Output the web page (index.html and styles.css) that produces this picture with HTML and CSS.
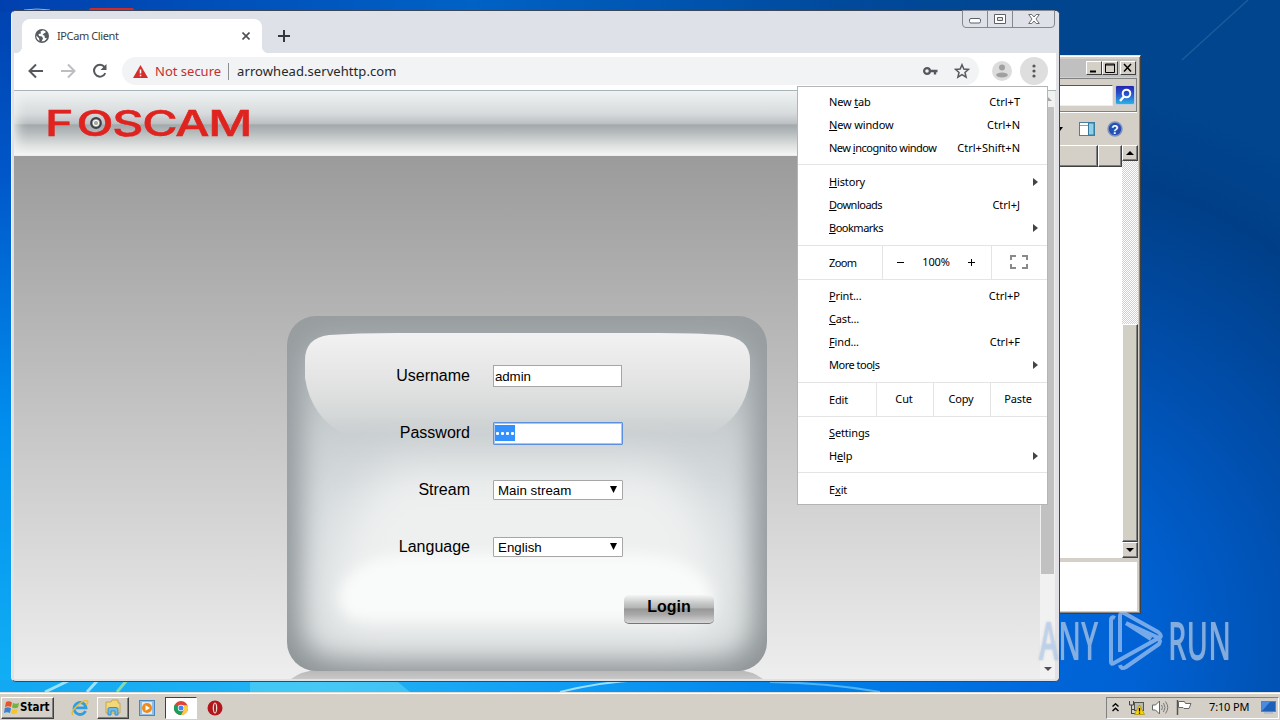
FILE: index.html
```html
<!DOCTYPE html>
<html lang="en">
<head>
  <meta charset="utf-8">
  <title>IPCam Client</title>
  <link rel="stylesheet" href="styles.css">
</head>
<body>
  <div class="desktop">
    <svg class="wallpaper" width="1280" height="692" viewBox="0 0 1280 692">
      <defs>
        <linearGradient id="sky" x1="0" y1="0" x2="0" y2="1">
          <stop offset="0" stop-color="#0042b0"/>
          <stop offset=".25" stop-color="#0057c8"/>
          <stop offset=".6" stop-color="#008cec"/>
          <stop offset="1" stop-color="#12b0f5"/>
        </linearGradient>
        <linearGradient id="floor" x1="0" y1="0" x2="1" y2="0">
          <stop offset="0" stop-color="#12a8f2"/>
          <stop offset=".25" stop-color="#22b4f4"/>
          <stop offset=".45" stop-color="#0e9cf4"/>
          <stop offset=".65" stop-color="#007ee8"/>
          <stop offset=".82" stop-color="#0068dc"/>
        </linearGradient>
        <radialGradient id="dark" gradientUnits="userSpaceOnUse" cx="1000" cy="640" r="560">
          <stop offset="0" stop-color="#0068dc"/>
          <stop offset=".25" stop-color="#0062d4"/>
          <stop offset=".55" stop-color="#004fae"/>
          <stop offset=".85" stop-color="#003f88"/>
          <stop offset="1" stop-color="#00458e"/>
        </radialGradient>
        <linearGradient id="top" x1="0" y1="0" x2="1" y2="0">
          <stop offset="0" stop-color="#0040ae"/>
          <stop offset=".45" stop-color="#0062c6"/>
          <stop offset=".8" stop-color="#004a9c"/>
          <stop offset="1" stop-color="#00458e"/>
        </linearGradient>
      </defs>
      <rect width="1280" height="692" fill="url(#sky)"/>
      <rect y="680" width="1280" height="12" fill="url(#floor)"/>
      <rect width="1050" height="12" fill="url(#top)"/>
      <rect x="1050" width="230" height="692" fill="url(#dark)"/>
      <path d="M1182 60 1248 0" stroke="#3f74aa" stroke-width="1.500" opacity=".45"/>
      <path d="M45 692 70 680M87 692 98 680" stroke="#9be3fb" stroke-width="3"/>
      <path d="M117 692 127 680" stroke="#7fdcb0" stroke-width="3"/>
      <path d="M250 682H398L410 692H250Z" fill="#6fe0f5" opacity=".45"/>
      <path d="M560 692Q600 682 640 680" stroke="#9be0ff" stroke-width="2" fill="none"/>
      <path d="M770 682Q830 683 880 692" stroke="#4fb4f5" stroke-width="2" fill="none"/>
      <path d="M24 10Q37 8 50 10" stroke="#8fb6e0" fill="none"/>
      <rect x="89" y="8" width="45" height="6" rx="2" fill="#cf2a2c"/>
    </svg>

    <!-- Explorer window, behind the browser -->
    <div class="explorer">
      <div class="explorer-title">
        <span class="win-btn"><svg width="12" height="10"><path d="M2 8.500H8" stroke="#000" stroke-width="2"/></svg></span>
        <span class="win-btn"><svg width="12" height="10"><path d="M1.500 1H10.500V9.500H1.500ZM1 2H11" fill="none" stroke="#000"/></svg></span>
        <span class="win-btn last"><svg width="12" height="10"><path d="M2 1 9 8.500M9 1 2 8.500" stroke="#000" stroke-width="1.500"/></svg></span>
      </div>
      <div class="explorer-search">
        <div class="search-box"></div>
        <span class="search-go"><svg width="18" height="18"><circle cx="10.500" cy="7.500" r="3.800" fill="none" stroke="#fff" stroke-width="2"/><path d="M8 10.500 4 15" stroke="#fff" stroke-width="2.500"/></svg></span>
      </div>
      <div class="explorer-tools">
        <svg width="6" height="4"><path d="M0 0H5L2 4H0Z"/></svg>
        <svg class="pane" width="16" height="14"><rect x=".5" y=".5" width="15" height="13" fill="#fff" stroke="#4b7f9d"/><path d="M1 3.500H9" stroke="#79a8c0"/><rect x="9.500" y="1" width="5.500" height="12" fill="#8fd0ea" stroke="#35789a"/></svg>
        <svg width="16" height="16"><circle cx="8" cy="8" r="7" fill="#2450b4" stroke="#8293bd" stroke-width="1.500"/><text class="help-mark" x="8" y="12.500" text-anchor="middle">?</text></svg>
      </div>
      <div class="explorer-body">
        <div class="explorer-list">
          <div class="columns"><span class="col-a"></span><span class="col-b"></span></div>
        </div>
        <div class="classic-scroll">
          <span class="scroll-btn"><svg width="8" height="4"><path d="M4 0 8 4H0Z"/></svg></span>
          <span class="scroll-track"></span>
          <span class="scroll-thumb"></span>
          <span class="scroll-btn"><svg width="8" height="4"><path d="M0 0H8L4 4Z"/></svg></span>
        </div>
      </div>
      <div class="explorer-details"></div>
    </div>

    <!-- Browser -->
    <div class="browser">
      <div class="tab-strip">
        <div class="tab">
          <svg width="14" height="14" viewBox="0 0 14 14"><circle cx="7" cy="7" r="7" fill="#565b60"/><path d="M8 1.200 5.500 2.500 6 4.500 3.500 5 4 7 7 7.500 8 9.500 6.500 12.600Q10 12.500 12 9.500L9.800 8.800 9.500 6.500 7.500 6 9 4.200 10.500 3.800 10.500 2.300ZM1.300 6.500 4 9.200 4.500 12Q1.300 10.500 1.300 6.500Z" fill="#fff"/></svg>
          <span class="tab-title">IPCam Client</span>
          <svg class="tab-close" width="8" height="8"><path d="M.5.5 7.500 7.500M7.500.5.5 7.500" stroke="#4c5054" stroke-width="1.600"/></svg>
        </div>
        <svg class="new-tab" width="12" height="12"><path d="M6 0V12M0 6H12" stroke="#34373c" stroke-width="2"/></svg>
        <div class="caption-btns">
          <span class="cap"><svg class="low" width="12" height="6"><rect x=".5" y=".5" width="11" height="4.500" rx="1.500" fill="#fff" stroke="#5d6066"/></svg></span>
          <span class="cap"><svg width="12" height="10"><path d="M.5.5H11.500V9.500H.5ZM3.500 3.500V6.500H8.500V3.500Z" fill="#fff" fill-rule="evenodd" stroke="#5d6066"/></svg></span>
          <span class="cap wide"><svg width="12" height="10"><path d="M.7.5H3.800L6 3 8.200.5H11.300L8 5 11.300 9.500H8.200L6 7 3.800 9.500H.7L4 5Z" fill="#fff" stroke="#5d6066" stroke-width=".9"/></svg></span>
        </div>
      </div>

      <div class="toolbar">
        <svg class="nav" width="16" height="16" viewBox="0 0 16 16"><path d="M15 8H2M8 1.500 1.500 8 8 14.500" fill="none" stroke="#55595e" stroke-width="2"/></svg>
        <svg class="nav" width="16" height="16" viewBox="0 0 16 16"><path d="M1 8H14M8 1.500 14.500 8 8 14.500" fill="none" stroke="#bcbec1" stroke-width="2"/></svg>
        <svg class="nav" width="16" height="16" viewBox="0 0 16 16"><path d="M13.300 10.200A5.900 5.900 0 1 1 12.500 4" fill="none" stroke="#55595e" stroke-width="2"/><path d="M14.500 1V7H8.500Z" fill="#55595e"/></svg>
        <div class="omnibox">
          <svg width="15" height="13" viewBox="0 0 15 13"><path d="M7.500 0 15 13H0Z" fill="#d32f2c"/><path d="M7.500 4.500V8.500M7.500 9.700V11.300" stroke="#fff" stroke-width="1.500"/></svg>
          <span class="not-secure">Not secure</span>
          <span class="url">arrowhead.servehttp.com</span>
          <svg class="key" width="15" height="8"><circle cx="4" cy="4" r="2.900" fill="none" stroke="#55595e" stroke-width="2.200"/><path d="M6.500 4H14.500M12 4V7.500" stroke="#55595e" stroke-width="2.400"/></svg>
          <svg width="16" height="16" viewBox="0 0 14 14"><path d="M7 1.500 8.600 5.300 12.700 5.600 9.600 8.300 10.600 12.400 7 10.200 3.400 12.400 4.400 8.300 1.300 5.600 5.400 5.300Z" fill="none" stroke="#55595e" stroke-width="1.300"/></svg>
        </div>
        <svg class="avatar" width="20" height="20"><circle cx="10" cy="10" r="10" fill="#dcdcdc"/><circle cx="10" cy="6.500" r="3" fill="#a0a0a0"/><ellipse cx="10" cy="14" rx="5.800" ry="2.600" fill="#a0a0a0"/></svg>
        <span class="kebab"><svg width="4" height="14"><circle cx="2" cy="2" r="1.600"/><circle cx="2" cy="7" r="1.600"/><circle cx="2" cy="12" r="1.600"/></svg></span>
      </div>

      <div class="page">
        <div class="content">
          <div class="site-header">
            <div class="logo">
              <span class="logo-text"><span class="logo-f">F</span>OSCAM</span>
              <svg class="lens" width="12" height="12"><circle cx="6" cy="6" r="4.800" fill="#cdd0cf" stroke="#3c4247" stroke-width="2.200"/><circle cx="6" cy="6" r="2.600" fill="#a7a79b" stroke="#fff"/></svg>
            </div>
          </div>
          <div class="login">
            <svg class="panel-art" width="480" height="363" viewBox="0 0 480 363">
              <defs>
                <filter id="soft" x="-20%" y="-20%" width="140%" height="140%"><feGaussianBlur stdDeviation="13"/></filter>
                <filter id="soft3" x="-20%" y="-30%" width="140%" height="160%"><feGaussianBlur stdDeviation="22"/></filter>
                <filter id="soft2" x="-20%" y="-40%" width="140%" height="180%"><feGaussianBlur stdDeviation="7"/></filter>
                <linearGradient id="rim" x1="0" y1="0" x2="0" y2="1">
                  <stop offset="0" stop-color="#989d9f"/>
                  <stop offset=".5" stop-color="#959b9f"/>
                  <stop offset="1" stop-color="#909597"/>
                </linearGradient>
                <linearGradient id="body" x1="0" y1="0" x2="0" y2="1">
                  <stop offset="0" stop-color="#a9b0b4"/>
                  <stop offset=".3" stop-color="#cacfd1"/>
                  <stop offset=".55" stop-color="#d8dddf"/>
                  <stop offset="1" stop-color="#d6dadb"/>
                </linearGradient>
                <linearGradient id="gloss" x1="0" y1="0" x2="0" y2="1">
                  <stop offset="0" stop-color="#f2f2f2"/>
                  <stop offset=".45" stop-color="#e4e4e4"/>
                  <stop offset=".8" stop-color="#d5d8d8"/>
                  <stop offset="1" stop-color="#d4d7d8" stop-opacity="0"/>
                </linearGradient>
                <linearGradient id="shade" x1="0" y1="0" x2="0" y2="1">
                  <stop offset="0" stop-color="#b5b5b5"/>
                  <stop offset="1" stop-color="#c8c8c8"/>
                </linearGradient>
                <clipPath id="panelClip"><rect width="480" height="355" rx="29"/></clipPath>
              </defs>
              <path d="M4 363Q14 355 34 353H446Q466 355 476 363Z" fill="url(#shade)"/>
              <g clip-path="url(#panelClip)">
                <rect width="480" height="355" fill="url(#rim)"/>
                <rect x="15" y="20" width="450" height="321" rx="30" fill="url(#body)" filter="url(#soft)"/>
                <path d="M110 150H370Q435 190 440 290Q430 325 400 325H80Q40 320 40 290Q45 190 110 150Z" fill="#eef0f0" filter="url(#soft3)"/>
                <path d="M130 238H350Q415 240 426 282Q425 306 400 305H80Q50 304 52 278Q62 240 130 238Z" fill="#f9fafa" filter="url(#soft2)"/>
                <path d="M18 44Q18 22 42 19Q70 17 110 17H370Q410 17 435 19Q463 22 463 44V62Q458 102 420 120H60Q24 102 18 62Z" fill="url(#gloss)"/>
              </g>
            </svg>
            <form class="login-form">
              <div class="field"><label>Username</label><span class="input">admin</span></div>
              <div class="field"><label>Password</label><span class="input focused"><span class="selected"><i></i><i></i><i></i><i></i></span></span></div>
              <div class="field"><label>Stream</label><span class="select">Main stream<svg width="7" height="7"><path d="M0 0H7L3.500 7Z"/></svg></span></div>
              <div class="field"><label>Language</label><span class="select">English<svg width="7" height="7"><path d="M0 0H7L3.500 7Z"/></svg></span></div>
              <button class="login-btn" type="button">Login</button>
            </form>
          </div>
        </div>
        <div class="scrollbar">
          <svg class="up" width="8" height="5"><path d="M4 0 8 4H0Z" fill="#a3a3a3"/></svg>
          <span class="bar-thumb"></span>
          <svg class="down" width="8" height="5"><path d="M0 0H8L4 4Z" fill="#505050"/></svg>
        </div>
      </div>
    </div>

    <!-- Browser menu -->
    <div class="menu">
      <div class="item"><span>New <u>t</u>ab</span><kbd>Ctrl+T</kbd></div>
      <div class="item"><span><u>N</u>ew window</span><kbd>Ctrl+N</kbd></div>
      <div class="item"><span class="tight">New <u>i</u>ncognito window</span><kbd>Ctrl+Shift+N</kbd></div>
      <hr>
      <div class="item"><span><u>H</u>istory</span><b class="more"></b></div>
      <div class="item"><span class="snug"><u>D</u>ownloads</span><kbd>Ctrl+J</kbd></div>
      <div class="item"><span class="snug"><u>B</u>ookmarks</span><b class="more"></b></div>
      <div class="group zoom">
        <span class="group-label">Zoom</span>
        <span class="zoom-ctl"><svg width="7" height="7"><path d="M0 3.500H7" stroke="#000"/></svg><span>100%</span><svg width="7" height="7"><path d="M0 3.500H7M3.500 0V7" stroke="#000"/></svg></span>
        <span class="full"><svg width="18" height="14"><path d="M1 5V1H6M12 1H17V5M17 9V13H12M6 13H1V9" fill="none" stroke="#8a8a8a" stroke-width="2"/></svg></span>
      </div>
      <div class="item"><span><u>P</u>rint...</span><kbd>Ctrl+P</kbd></div>
      <div class="item"><span><u>C</u>ast...</span></div>
      <div class="item"><span><u>F</u>ind...</span><kbd>Ctrl+F</kbd></div>
      <div class="item"><span class="snug">More too<u>l</u>s</span><b class="more"></b></div>
      <div class="group edit">
        <span class="group-label">Edit</span>
        <span class="cell">Cut</span><span class="cell">Copy</span><span class="cell">Paste</span>
      </div>
      <div class="item"><span><u>S</u>ettings</span></div>
      <div class="item"><span>H<u>e</u>lp</span><b class="more"></b></div>
      <hr>
      <div class="item"><span>E<u>x</u>it</span></div>
    </div>

    <!-- Watermark -->
    <div class="watermark">
      <span class="mark any">ANY</span>
      <svg width="56" height="62" viewBox="0 0 56 62"><path d="M6 8Q2 6 2 10V52Q2 55 5 53L48 29Q53 30 50 34L17 57Q12 60 11 55M11 42V6Q11 2 15 3L49 22Q54 26 50 28L17 13M17 13 42 29" fill="none" stroke="#b4d0f4" stroke-opacity=".65" stroke-width="4" stroke-linejoin="round"/></svg>
      <span class="mark run">RUN</span>
    </div>
  </div>

  <div class="taskbar">
    <div class="start">
      <svg width="16" height="15" viewBox="0 0 16 15"><path d="M2 2Q5 .5 8 2.500L7 7Q4 5.500 1 7Z" fill="#e2562a"/><path d="M9 3Q12 4.500 15 3L14 7.500Q11 9 8 7.500Z" fill="#74b43c"/><path d="M.8 8Q4 6.500 7 8.300L6 13Q3 11.500 0 13Z" fill="#3b83d0"/><path d="M8 8.700Q11 10 13.800 8.800L12.800 13Q10 14.800 7 13.500Z" fill="#f5c62c"/></svg>
      Start
    </div>
    <span class="task ie"><svg width="18" height="18" viewBox="0 0 18 18"><path d="M14.500 12A6 6 0 1 1 15 8.800H5" fill="none" stroke="#2f9de0" stroke-width="2.800"/><path d="M2 16Q-1 13 7 6 14 0 16.500 2 17.500 3.500 15 6" fill="none" stroke="#e7bd3a" stroke-width="1.500"/></svg></span>
    <span class="task raised"><svg width="16" height="17" viewBox="0 0 16 17"><path d="M1 3H6L7 1H13V4H15V14H1Z" fill="#f3d77b" stroke="#c9a64a"/><path d="M3 16V10Q3 8.500 5 8.500H11Q13 8.500 13 10V16H10V12H6V16Z" fill="#6dbbe6" stroke="#3d8fc2"/></svg></span>
    <span class="task wmp"><svg width="16" height="16"><rect x=".5" y=".5" width="15" height="15" fill="#8ebfe8" stroke="#4d86b8"/><rect x="3" y="2" width="10" height="12" fill="#dcebf7"/><circle cx="8" cy="8" r="5" fill="#f18918"/><path d="M6.500 5.200V10.800L11 8Z" fill="#fff"/></svg></span>
    <span class="task pressed"><svg width="14" height="14" viewBox="0 0 14 14"><circle cx="7" cy="7" r="7" fill="#dc4437"/><path d="M7 7 .9 3.500A7 7 0 0 0 7 14L10 8.700Z" fill="#1b9e58"/><path d="M7 7 10 8.700 7 14A7 7 0 0 0 13.500 4.200H7Z" fill="#fccd41"/><circle cx="7" cy="7" r="3.200" fill="#fff"/><circle cx="7" cy="7" r="2.500" fill="#4286f4"/></svg></span>
    <span class="task opera"><svg width="16" height="16"><circle cx="8" cy="8" r="7.500" fill="#b3161a"/><ellipse cx="8" cy="8" rx="2.300" ry="5.500" fill="#f3d9d5"/><ellipse cx="8" cy="8" rx=".9" ry="4.600" fill="#8f0d10"/></svg></span>
    <div class="tray">
      <svg width="7" height="9"><path d="M.5 3.500 3.500.8 6.500 3.500M.5 8 3.500 5.200 6.500 8" fill="none" stroke="#000" stroke-width="1.400"/></svg>
      <svg class="net" width="17" height="15"><rect x="6.500" y="2.500" width="9" height="8" fill="#b9b9b4" stroke="#55574f"/><path d="M1.500 1V5H5.500V1M3.500 5V14M3.500 9.500H7M3.500 13.500H8" fill="none" stroke="#444"/><path d="M11.500 5 16.500 14.500H6.500Z" fill="#f8d40e" stroke="#a38a08" stroke-width=".7"/><path d="M11.500 8V11.500M11.500 12.500V13.700" stroke="#000" stroke-width="1.300"/></svg>
      <svg width="17" height="15"><path d="M.5 5H3.500L7.500 1V14L3.500 10H.5Z" fill="#fff" stroke="#666"/><path d="M9.500 5Q11.500 7.500 9.500 10M11.500 3Q14.500 7.500 11.500 12M13.500 1.500Q18 7.500 13.500 13.500" fill="none" stroke="#777"/></svg>
      <svg class="flag" width="16" height="15"><path d="M1.500 0V15" stroke="#555" stroke-width="1.500"/><path d="M2.500 1.500H8.500L9.500 3.500H15L13 8.500H8L7 7.500H2.500Z" fill="#fff" stroke="#666"/></svg>
      <span class="clock">7:10 PM</span>
      <svg class="show" width="15" height="13"><rect x=".5" y=".5" width="14" height="10" fill="#1e5fb8" stroke="#6c7f99"/><path d="M1 10 9 1H1Z" fill="#4a8ae0"/><path d="M3 12H12" stroke="#8eaed0"/></svg>
    </div>
  </div>
</body>
</html>
```

FILE: styles.css
```css
body {
  margin: 0;
  width: 1280px;
  height: 720px;
  overflow: hidden;
  display: flex;
  flex-direction: column;
  font-family: "Noto Sans", sans-serif;
  font-size: 11px;
  color: #000;
}
svg {
  display: block;
  flex: none;
}
.desktop {
  position: relative;
  height: 692px;
  overflow: hidden;
}
/* Explorer window */
.explorer {
  position: absolute;
  left: 900px;
  top: 55px;
  width: 241px;
  height: 559px;
  box-sizing: border-box;
  padding: 3px 3px 2px;
  background: #d4d0c8;
  border: 1px solid #404040;
  border-top-color: #e8e6e0;
  box-shadow: inset 0 1px #fff, inset -1px -1px #8a8780;
  display: flex;
  flex-direction: column;
}
.explorer-title {
  height: 18px;
  display: flex;
  align-items: center;
  justify-content: flex-end;
  padding-right: 1px;
  background: #c0c0c0;
}
.win-btn {
  width: 16px;
  height: 14px;
  box-sizing: border-box;
  display: flex;
  align-items: center;
  justify-content: center;
  background: #d4d0c8;
  border: 1px solid;
  border-color: #fff #404040 #404040 #fff;
}
.win-btn.last {
  margin-left: 2px;
}
.explorer-search {
  height: 34px;
  margin-top: 1px;
  display: flex;
  align-items: center;
  box-sizing: border-box;
  border: 1px solid #808080;
  box-shadow: 0 1px #fff;
}
.search-box {
  flex: 1;
  height: 19px;
  background: #fff;
  border: 1px solid #555;
  border-color: #555 #eee #eee #555;
}
.search-go {
  width: 18px;
  height: 18px;
  margin: 0 1px 0 2px;
  border: 1px solid #b9cbe6;
  border-radius: 2px;
  background: linear-gradient(#2426ae 0%, #2c54cc 45%, #27b6df 100%);
}
.explorer-tools {
  height: 33px;
  display: flex;
  align-items: center;
  justify-content: flex-end;
  padding-right: 14px;
}
.pane {
  margin: 0 12px 0 15px;
}
.help-mark {
  font: bold 12px "Liberation Sans", sans-serif;
  fill: #fff;
}
.explorer-body {
  flex: 1;
  display: flex;
  margin-right: -1px;
  background: #fff;
}
.explorer-list {
  flex: 1;
}
.columns {
  display: flex;
  height: 22px;
}
.col-a, .col-b {
  box-sizing: border-box;
  background: #d4d0c8;
  border: 1px solid;
  border-color: #fff #404040 #404040 #fff;
  box-shadow: inset -1px -1px #808080;
}
.col-a {
  flex: 1;
}
.col-b {
  width: 24px;
}
.classic-scroll {
  width: 16px;
  display: flex;
  flex-direction: column;
}
.scroll-btn, .scroll-thumb {
  box-sizing: border-box;
  background: #d4d0c8;
  border: 1px solid;
  border-color: #fff #404040 #404040 #fff;
  box-shadow: inset -1px -1px #808080;
}
.scroll-btn {
  height: 16px;
  display: flex;
  align-items: center;
  justify-content: center;
}
.scroll-track {
  height: 163px;
  background: repeating-conic-gradient(#fff 0 25%, #d4d0c8 0 50%) 0 0 / 2px 2px;
}
.scroll-thumb {
  flex: 1;
  background: #d2d0c4;
}
.explorer-details {
  height: 49px;
  border-top: 4px solid #d4d0c8;
  background: #fff;
}
/* Browser window */
.browser {
  position: absolute;
  left: 11px;
  top: 10px;
  width: 1049px;
  height: 672px;
  box-sizing: border-box;
  padding: 0 4px 2px 2px;
  background: #e2e2e6;
  border: 1px solid #3b4656;
  border-left-color: #f2f2f4;
  border-radius: 5px;
  display: flex;
  flex-direction: column;
}
.tab-strip {
  height: 42px;
  margin: 0 -4px 0 -2px;
  display: flex;
  align-items: flex-start;
  background: #dee1e8;
  border-radius: 4px 4px 0 0;
}
.tab {
  position: relative;
  width: 240px;
  height: 34px;
  margin: 8px 0 0 10px;
  box-sizing: border-box;
  padding: 0 12px 0 13px;
  display: flex;
  align-items: center;
  background: #fff;
  border-radius: 8px 8px 0 0;
}
.tab::before, .tab::after {
  content: "";
  position: absolute;
  bottom: 0;
  width: 7px;
  height: 7px;
}
.tab::before {
  left: -7px;
  background: radial-gradient(circle at 0 0, #dee1e8 7px, #fff 7.5px);
}
.tab::after {
  right: -7px;
  background: radial-gradient(circle at 100% 0, #dee1e8 7px, #fff 7.5px);
}
.tab-title {
  margin-left: 8px;
  padding-bottom: 2px;
  letter-spacing: -.4px;
  color: #3c4043;
}
.tab-close {
  margin-left: auto;
}
.new-tab {
  margin: 19px 0 0 16px;
}
.caption-btns {
  display: flex;
  margin: -1px 4px 0 auto;
  height: 16px;
  border: 1px solid #85888f;
  border-radius: 0 0 4px 4px;
}
.cap {
  width: 24px;
  display: flex;
  align-items: center;
  justify-content: center;
  border-right: 1px solid #85888f;
}
.cap.wide {
  width: 41px;
  border-right: 0;
}
.low {
  margin-top: 4px;
}
.toolbar {
  height: 38px;
  margin-right: -1px;
  display: flex;
  align-items: center;
  padding-bottom: 1px;
  background: #fff;
  border-bottom: 1px solid #a9b4b9;
  box-sizing: border-box;
}
.nav {
  margin-left: 14px;
}
.nav + .nav {
  margin-left: 16px;
}
.omnibox {
  width: 857px;
  height: 28px;
  margin-left: 14px;
  box-sizing: border-box;
  padding: 0 9px 0 11px;
  display: flex;
  align-items: center;
  border-radius: 14px;
  background: #f1f3f4;
  font-size: 13px;
}
.not-secure {
  margin-left: 7px;
  padding-right: 7px;
  line-height: 17px;
  color: #c5302f;
  border-right: 1px solid #8c8f92;
}
.url {
  margin-left: 8px;
  padding-bottom: 1px;
  letter-spacing: .07px;
  color: #25282b;
}
.key {
  margin: 0 16px 0 auto;
}
.avatar {
  margin-left: 13px;
}
.kebab {
  width: 28px;
  height: 28px;
  margin-left: 8px;
  display: flex;
  align-items: center;
  justify-content: center;
  border-radius: 50%;
  background: #dedede;
  fill: #55595e;
}
/* Camera login page */
.page {
  flex: 1;
  display: flex;
  overflow: hidden;
}
.content {
  flex: 1;
  display: flex;
  flex-direction: column;
  background: linear-gradient(#9b9b9b 65px, #c4c4c4 55%, #eeeeee 100%);
}
.site-header {
  height: 64px;
  flex: none;
  background: linear-gradient(#f0f3f3 0%, #d8dbdd 35%, #bcc0c2 51%, #a3a9ab 53%, #b6bbbc 65%, #dde0df 85%, #f5f6f6 100%);
  border-bottom: 1px solid #e8f0ef;
  box-shadow: inset 14px 0 12px -12px #f2f5f5;
}
.logo {
  position: relative;
  margin: 15px 0 0 34px;
  width: 202px;
  height: 34px;
}
.logo-text {
  display: block;
  font: 500 35px/34px Inter, "Liberation Sans", sans-serif;
  letter-spacing: -.9px;
  color: #df2420;
  -webkit-text-stroke: .5px #df2420;
  transform: scaleX(1.38);
  transform-origin: 0 0;
  margin-left: -3px;
}
.logo-f {
  letter-spacing: 2.2px;
}
.lens {
  position: absolute;
  left: 42px;
  top: 11px;
}
.login {
  position: relative;
  width: 480px;
  height: 363px;
  margin: 160px 0 0 273px;
}
.panel-art {
  position: absolute;
}
.login-form {
  position: relative;
  display: flex;
  flex-direction: column;
  padding-top: 32px;
}
.field {
  height: 57px;
  display: flex;
  align-items: center;
}
label {
  width: 183px;
  margin-right: 23px;
  padding-bottom: 2px;
  text-align: right;
  font: 16px "Liberation Sans", Arial, sans-serif;
}
.input, .select {
  width: 130px;
  box-sizing: border-box;
  display: flex;
  align-items: center;
  margin-bottom: 2px;
  padding-top: 2px;
  background: #fff;
  border: 1px solid #a6a6a6;
  font: 13.33px "Liberation Sans", Arial, sans-serif;
}
.input {
  width: 129px;
  height: 22px;
  padding-left: 1px;
  letter-spacing: -.1px;
}
.input.focused {
  width: 130px;
  height: 23px;
  padding: 0 0 0 1px;
  margin-bottom: 1px;
  border: 1px solid #5c90e0;
  box-shadow: inset 0 0 0 1px #a9c6f2;
  border-radius: 1px;
}
.selected {
  width: 19px;
  height: 16px;
  padding-left: 1px;
  display: flex;
  align-items: center;
  gap: 2px;
  background: #3390ff;
}
.selected i {
  width: 3px;
  height: 3px;
  background: #fff;
  border-radius: 1px;
}
.select {
  height: 20px;
  padding: 2px 5px 0 4px;
  justify-content: space-between;
  border-radius: 1px;
}
.select svg {
  margin-bottom: 2px;
}
.login-btn {
  width: 90px;
  height: 29px;
  margin: 19px 0 0 337px;
  padding: 0 0 5px;
  border: 0;
  border-bottom: 1px solid #747778;
  border-radius: 5px;
  background: linear-gradient(#f4f5f5 0%, #c6c8c8 30%, #b5b5b5 45%, #989898 50%, #a9a9a9 70%, #d8d8d8 100%);
  font: bold 16px "Liberation Sans", Arial, sans-serif;
}
.scrollbar {
  width: 15px;
  display: flex;
  flex-direction: column;
  align-items: center;
  background: #f1f1f1;
}
.up {
  margin: 6px 0 5px;
}
.bar-thumb {
  width: 13px;
  height: 467px;
  background: #c1c1c1;
}
.down {
  margin: auto 0 7px;
}
/* Drop-down menu */
.menu {
  position: absolute;
  left: 797px;
  top: 86px;
  width: 251px;
  height: 419px;
  box-sizing: border-box;
  padding-top: 4px;
  background: #fff;
  border: 1px solid #b4b4b4;
  letter-spacing: -.15px;
}
.item {
  height: 23px;
  box-sizing: border-box;
  padding: 0 27px 2px 31px;
  display: flex;
  align-items: center;
  justify-content: space-between;
}
.tight {
  letter-spacing: -.5px;
}
.snug {
  letter-spacing: -.5px;
}
u {
  text-underline-offset: 1px;
}
kbd {
  font: inherit;
  letter-spacing: 0;
}
.more {
  margin: 1px -18px 0 0;
  border: 4px solid transparent;
  border-left: 5px solid #444;
  border-right: 0;
}
hr {
  height: 1px;
  margin: 4px 0 6px;
  border: 0;
  background: #e4e4e4;
}
.group {
  height: 33px;
  margin: 5px 0;
  display: flex;
  border: 1px solid #e4e4e4;
  border-width: 1px 0;
}
.group-label {
  box-sizing: border-box;
  padding-left: 31px;
  display: flex;
  align-items: center;
}
.zoom .group-label {
  width: 84px;
  letter-spacing: -.6px;
}
.edit .group-label {
  width: 78px;
}
.zoom-ctl {
  width: 110px;
  box-sizing: border-box;
  padding: 0 16px 0 14px;
  display: flex;
  align-items: center;
  justify-content: space-between;
  border: 1px solid #e4e4e4;
  border-width: 0 1px;
}
.zoom-ctl span {
  padding-bottom: 2px;
}
.full {
  flex: 1;
  padding: 0 1px 1px 0;
  display: flex;
  align-items: center;
  justify-content: center;
}
.cell {
  width: 54px;
  padding: 0 2px 2px 0;
  display: flex;
  align-items: center;
  justify-content: center;
  border-left: 1px solid #e4e4e4;
}
/* Watermark */
.watermark {
  position: absolute;
  left: 1039px;
  top: 610px;
  width: 194px;
  height: 62px;
  display: flex;
  align-items: center;
}
.watermark svg {
  margin-left: 70px;
}
.mark {
  position: absolute;
  top: 5px;
  font: 600 52px/50px "Open Sans", sans-serif;
  color: rgba(187, 213, 245, .65);
  transform: scaleX(.56);
  transform-origin: 0 0;
  text-shadow: 0 0 3px rgba(90, 110, 140, .35);
}
.any {
  left: 0;
}
.run {
  left: 129px;
}
/* Taskbar */
.taskbar {
  height: 28px;
  box-sizing: border-box;
  padding: 2px 0 0 1px;
  display: flex;
  align-items: center;
  background: #d4d0c8;
  border-top: 1px solid #e2dfd9;
  box-shadow: inset 0 1px #fff;
}
.start {
  width: 53px;
  height: 22px;
  box-sizing: border-box;
  padding: 0 0 1px 2px;
  display: flex;
  align-items: center;
  border: 1px solid;
  border-color: #fff #404040 #404040 #fff;
  box-shadow: inset -1px -1px #808080;
  font: bold 11.5px "DejaVu Sans Condensed", "DejaVu Sans", sans-serif;
}
.task {
  width: 32px;
  height: 22px;
  box-sizing: border-box;
  display: flex;
  align-items: center;
  justify-content: center;
}
.ie {
  margin-left: 10px;
}
.raised {
  margin-left: 1px;
  border: 1px solid;
  border-color: #fff #404040 #404040 #fff;
  box-shadow: inset -1px -1px #808080;
}
.wmp {
  margin-left: 2px;
}
.pressed {
  margin-left: 2px;
  background: #fff;
  border: 1px solid;
  border-color: #404040 #fff #fff #404040;
}
.opera {
  margin-left: 2px;
}
.tray {
  width: 173px;
  height: 22px;
  margin: 0 1px 0 auto;
  box-sizing: border-box;
  padding-left: 5px;
  display: flex;
  align-items: center;
  border: 1px solid;
  border-color: #808080 #fff #fff #808080;
}
.net {
  margin: 0 7px 0 9px;
}
.flag {
  margin-left: 7px;
}
.clock {
  margin-left: 17px;
  padding-bottom: 2px;
  letter-spacing: -.15px;
}
.show {
  margin-left: auto;
  margin-right: 2px;
}
```
